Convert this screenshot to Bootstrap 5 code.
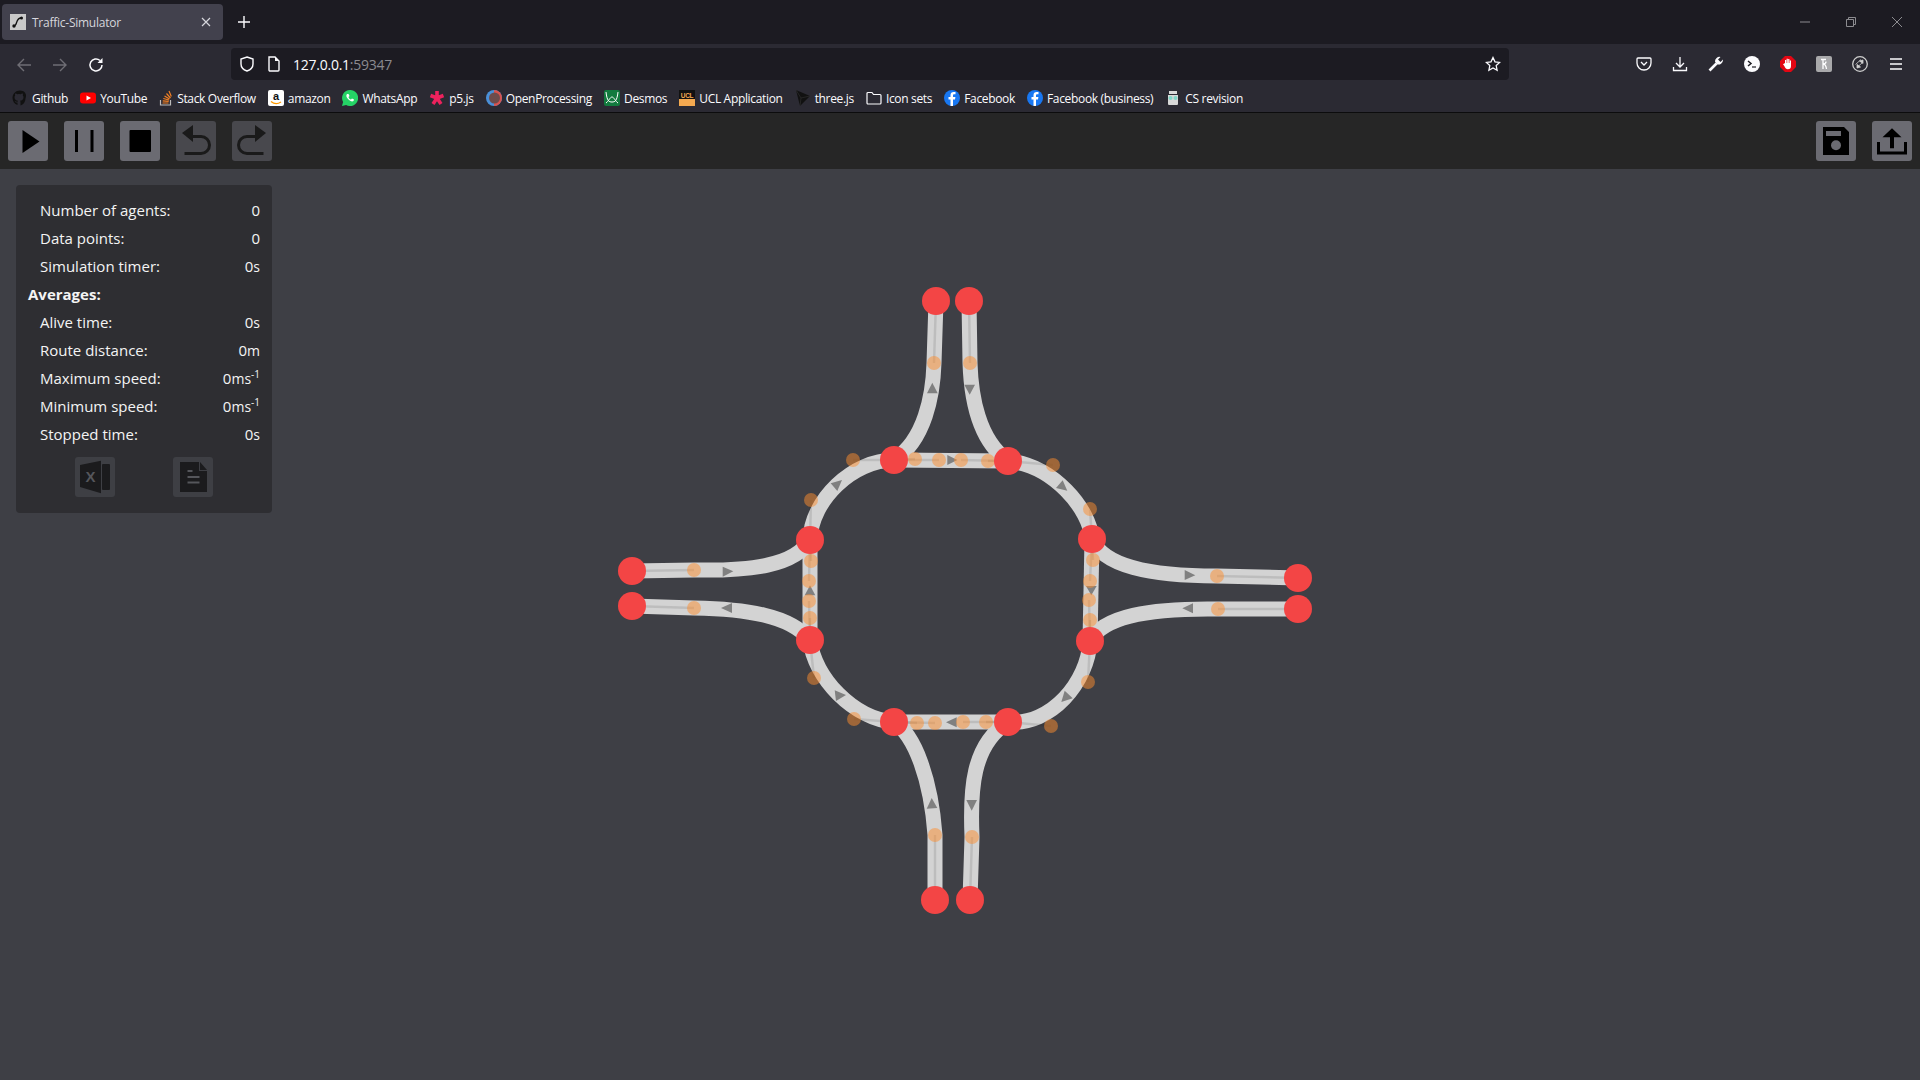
<!DOCTYPE html>
<html lang="en">
<head>
<meta charset="utf-8">
<title>Traffic-Simulator</title>
<link rel="stylesheet" href="https://cdn.jsdelivr.net/npm/bootstrap@5.3.0/dist/css/bootstrap.min.css">
<style>
html,body{height:100%;}
body{background:#3e3f45;font-family:"Open Sans","Liberation Sans",sans-serif;overflow:hidden;color:#f4f4f4;}
.shell{height:1080px;}
.tabstrip{height:44px;background:#1c1b22;}
.tabitem{width:221px;height:36px;margin-left:2px;background:#42414d;border-radius:4px;padding:0 8px;color:#d6d6dc;font-size:12px;letter-spacing:-.25px;}
.tabtitle{margin-left:6px;padding-top:1px;}
.newtab{width:42px;}
.winbtn{width:46px;height:44px;}
.navrow{height:40px;background:#2b2a33;padding-right:6px;}
.navbtn{width:36px;height:32px;}
.navleft{padding-left:6px;padding-top:2px;gap:0;width:231px;}
.urlbar{width:1278px;height:32px;background:#1c1b22;border-radius:4px;padding:0 8px;font-size:14px;letter-spacing:-.25px;color:#fbfbfe;}
.urlbar .dim{color:#8a8a90;}
.urlmid{gap:12px;}
.endicons{margin-left:117px;gap:0;}
.endicons>span{width:36px;}
.bmrow{height:29px;background:#2b2a33;border-bottom:1px solid #0c0c0d;padding-left:12px;gap:12px;font-size:12px;letter-spacing:-.33px;color:#fbfbfe;}
.bmk{gap:4px;}
.bmk span{margin-top:2px;}
.toolrow{height:56px;background:#262626;padding:8px;}
.toolset{gap:16px;}
.tbtn{width:40px;height:40px;border-radius:3px;background:#6b6b72;padding:0;border:0;}
.tbtn.off{background:#48484d;}
.canvasarea{height:911px;padding:16px;}
.roadsvg{position:absolute;inset:0;width:100%;height:100%;}
.statpanel{position:relative;width:256px;background:#2e2e32;border-radius:4px;padding:11px 12px 16px;font-size:15px;z-index:1;}
.statline{height:28px;padding-left:12px;}
.stathead{height:28px;font-weight:700;}
.unit{font-size:14px;}
.unit sup{font-size:10px;top:-.6em;}
.panelbtns{gap:58px;margin-top:9px;}
.pbtn{width:40px;height:40px;background:#3e3f44;border-radius:3px;padding:0;border:0;}
</style>
</head>
<body>
<div class="shell d-flex flex-column">
  <div class="tabstrip d-flex align-items-start">
    <div class="tabitem d-flex align-items-center mt-1 flex-shrink-0">
      <svg width="16" height="16" viewBox="0 0 16 16" class="flex-shrink-0"><rect width="16" height="16" fill="#c9c9c9"/><path d="M4 12c3.500 0 1.500-8 7-8" fill="none" stroke="#111" stroke-width="1.400"/><circle cx="4" cy="12" r="1.700" fill="#111"/><circle cx="11.500" cy="4" r="1.500" fill="#111"/></svg>
      <span class="tabtitle flex-grow-1">Traffic-Simulator</span>
      <svg width="10" height="10" viewBox="0 0 10 10"><path d="M1 1l8 8M9 1l-8 8" stroke="#d6d6dc" stroke-width="1.200"/></svg>
      <span class="ms-1"></span>
    </div>
    <div class="newtab d-flex justify-content-center align-items-center h-100">
      <svg width="12" height="12" viewBox="0 0 12 12"><path d="M6 0v12M0 6h12" stroke="#fbfbfe" stroke-width="1.400"/></svg>
    </div>
    <div class="ms-auto d-flex">
      <div class="winbtn d-flex justify-content-center align-items-center"><svg width="10" height="10" viewBox="0 0 10 10"><path d="M0 5h10" stroke="#8c8c90"/></svg></div>
      <div class="winbtn d-flex justify-content-center align-items-center"><svg width="10" height="10" viewBox="0 0 10 10"><path d="M.5 2.500h7v7h-7zM2.500 2.500V.5h7v7h-2" fill="none" stroke="#8c8c90"/></svg></div>
      <div class="winbtn d-flex justify-content-center align-items-center"><svg width="10" height="10" viewBox="0 0 10 10"><path d="M0 0l10 10M10 0L0 10" stroke="#8c8c90"/></svg></div>
    </div>
  </div>

  <div class="navrow d-flex align-items-center">
    <div class="navleft d-flex align-items-center flex-shrink-0">
      <span class="navbtn d-flex justify-content-center align-items-center"><svg width="16" height="16" viewBox="0 0 16 16"><path d="M15 8H2M8 2L2 8l6 6" fill="none" stroke="#6f6e75" stroke-width="1.400"/></svg></span>
      <span class="navbtn d-flex justify-content-center align-items-center"><svg width="16" height="16" viewBox="0 0 16 16"><path d="M1 8h13M8 2l6 6-6 6" fill="none" stroke="#6f6e75" stroke-width="1.400"/></svg></span>
      <span class="navbtn d-flex justify-content-center align-items-center"><svg width="16" height="16" viewBox="0 0 16 16"><path d="M14 8a6 6 0 1 1-2-4.500" fill="none" stroke="#fbfbfe" stroke-width="1.500"/><path d="M14.500 1v5h-5z" fill="#fbfbfe"/></svg></span>
    </div>
    <div class="urlbar d-flex align-items-center flex-shrink-0">
      <div class="urlmid d-flex align-items-center flex-grow-1">
        <svg width="16" height="16" viewBox="0 0 16 16"><path d="M8 1l6 2v5c0 3.500-3 6-6 7-3-1-6-3.500-6-7V3z" fill="none" stroke="#fbfbfe" stroke-width="1.400"/></svg>
        <svg width="14" height="16" viewBox="0 0 14 16"><path d="M2 1h6l4 4v9a1 1 0 0 1-1 1H3a1 1 0 0 1-1-1z" fill="none" stroke="#fbfbfe" stroke-width="1.400"/><path d="M8 1v4h4z" fill="#fbfbfe"/></svg>
        <span>127.0.0.1<span class="dim">:59347</span></span>
      </div>
      <svg width="16" height="16" viewBox="0 0 16 16"><path d="M8 1.500l2 4.300 4.700.6-3.500 3.200.9 4.700L8 11.900l-4.100 2.400.9-4.700L1.300 6.400 6 5.800z" fill="none" stroke="#fbfbfe" stroke-width="1.300"/></svg>
    </div>
    <div class="endicons d-flex align-items-center">
      <span class="d-flex justify-content-center"><svg width="16" height="16" viewBox="0 0 16 16"><path d="M2 2h12a1 1 0 0 1 1 1v4a7 7 0 0 1-14 0V3a1 1 0 0 1 1-1z" fill="none" stroke="#fbfbfe" stroke-width="1.300"/><path d="M5 6l3 3 3-3" fill="none" stroke="#fbfbfe" stroke-width="1.300"/></svg></span>
      <span class="d-flex justify-content-center"><svg width="16" height="16" viewBox="0 0 16 16"><path d="M8 1v10M4 7l4 4 4-4M1.500 11v3.500h13V11" fill="none" stroke="#fbfbfe" stroke-width="1.300"/></svg></span>
      <span class="d-flex justify-content-center"><svg width="16" height="16" viewBox="0 0 16 16"><path d="M1.500 14.500l7-7" stroke="#fbfbfe" stroke-width="2.600"/><path d="M15 3.500a4.500 4.500 0 0 1-6.500 4.500L7 5.500A4.500 4.500 0 0 1 12.500 1L10 3.500l2.500 2.500z" fill="#fbfbfe"/></svg></span>
      <span class="d-flex justify-content-center"><svg width="16" height="16" viewBox="0 0 16 16"><circle cx="8" cy="8" r="8" fill="#fbfbfe"/><path d="M4 5l3 2.500L4 10" fill="none" stroke="#1c1b22" stroke-width="1.500"/><path d="M8 11h4" stroke="#1c1b22" stroke-width="1.200"/></svg></span>
      <span class="d-flex justify-content-center"><svg width="16" height="16" viewBox="0 0 16 16"><path d="M5 0h6l5 5v6l-5 5H5l-5-5V5z" fill="#e30613"/><path d="M5 7V4h1.200v3h.4V2.800h1.200V7h.4V3h1.200v4h.4V4.500h1.200V10a3.200 3.200 0 0 1-3.200 3.200c-1.500 0-2.500-1-3.500-3.200L3 8.200z" fill="#fff"/></svg></span>
      <span class="d-flex justify-content-center"><svg width="16" height="16" viewBox="0 0 16 16"><rect width="16" height="16" rx="2" fill="#a9a9ab"/><path d="M5 3.500h5M7 3.500V13M7 8c2 0 3 1 3.500 5M7 8c2 0 3-1 3-2.500" fill="none" stroke="#fff" stroke-width="1.300"/></svg></span>
      <span class="d-flex justify-content-center"><svg width="16" height="16" viewBox="0 0 16 16"><circle cx="8" cy="8" r="7.300" fill="none" stroke="#cfcfcf" stroke-width="1.300"/><path d="M3.500 8.500L9 3.500M5 11.500l5.500-5M7.500 5l3.500-1v3.500zM8.500 11L5 12V8.500z" fill="#cfcfcf" stroke="#cfcfcf" stroke-width=".8"/></svg></span>
      <span class="d-flex justify-content-center"><svg width="14" height="12" viewBox="0 0 14 12"><path d="M1 1h12M1 6h12M1 11h12" stroke="#fbfbfe" stroke-width="1.500"/></svg></span>
    </div>
  </div>

  <div class="bmrow d-flex align-items-center flex-shrink-0">
    <div class="bmk d-flex align-items-center"><svg width="16" height="16" viewBox="0 0 16 16"><path d="M8 .5C3.800.5.5 3.800.5 8c0 3.300 2.100 6.100 5 7.100V12.500c-2 .4-2.500-1-2.700-1.500 1 .2 1.500 1 2.700 1 0-.5.200-.9.500-1.200-2-.2-3.500-1-3.500-3.500 0-.8.300-1.400.7-1.900-.1-.4-.3-1.200.1-2 .8 0 1.600.5 2 .8a7 7 0 0 1 3.400 0c.4-.3 1.200-.8 2-.8.400.8.200 1.600.1 2 .4.500.7 1.100.7 1.900 0 2.500-1.500 3.300-3.500 3.500.3.300.5.800.5 1.400v3.300c2.900-1 5-3.800 5-7.100C15.500 3.800 12.200.5 8 .5z" fill="#111"/></svg><span>Github</span></div>
    <div class="bmk d-flex align-items-center"><svg width="16" height="16" viewBox="0 0 16 16"><rect y="2.500" width="16" height="11" rx="3" fill="#f00"/><path d="M6.500 5.500v5l4.500-2.500z" fill="#fff"/></svg><span>YouTube</span></div>
    <div class="bmk d-flex align-items-center"><svg width="14" height="16" viewBox="0 0 14 16"><path d="M1.500 10v5h10v-5" fill="none" stroke="#bcbbbb" stroke-width="1.200"/><path d="M3.500 13h6M3.700 10.800l6 .5M4.300 8.500l5.700 1.500M5.500 6l5 3M7.500 3.500l4 4.500M10 1l2.300 5.500" stroke="#f48024" stroke-width="1.200"/></svg><span>Stack Overflow</span></div>
    <div class="bmk d-flex align-items-center"><svg width="16" height="16" viewBox="0 0 16 16"><rect width="16" height="16" rx="2" fill="#fff"/><text x="8" y="10" text-anchor="middle" font-size="11" font-weight="700" font-family="Liberation Sans,sans-serif" fill="#111">a</text><path d="M3 11.500c3 2.500 7 2.500 10 .5" fill="none" stroke="#f90" stroke-width="1.300"/></svg><span>amazon</span></div>
    <div class="bmk d-flex align-items-center"><svg width="16" height="16" viewBox="0 0 16 16"><path d="M8 0a8 8 0 0 0-6.900 12L0 16l4.100-1.100A8 8 0 1 0 8 0z" fill="#25d366"/><path d="M5 4c-1 1-1 3 1 5s4 3 5.500 2l.5-1.500-2-1-1 1c-1 0-2.500-1.500-2.500-2.500l1-1-1-2z" fill="#fff"/></svg><span>WhatsApp</span></div>
    <div class="bmk d-flex align-items-center"><svg width="16" height="16" viewBox="0 0 16 16"><path d="M8 8V1M8 8l6.500-2.500M8 8l4 6M8 8l-4 6M8 8L1.500 5.500" stroke="#ed225d" stroke-width="3.600"/></svg><span>p5.js</span></div>
    <div class="bmk d-flex align-items-center"><svg width="16" height="16" viewBox="0 0 16 16"><circle cx="8" cy="8" r="8" fill="#4a90d9"/><path d="M8 0a8 8 0 0 1 0 16z" fill="#d9534f"/><circle cx="8.500" cy="8" r="5.500" fill="#6d4c4c"/></svg><span>OpenProcessing</span></div>
    <div class="bmk d-flex align-items-center"><svg width="16" height="16" viewBox="0 0 16 16"><rect width="16" height="16" rx="2" fill="#127a3e"/><path d="M2 2c1 9 3 10 6 10s5-1 6-10M2 13c3-2 4-6 6-6s3 4 6 6" fill="none" stroke="#fff" stroke-width="1"/></svg><span>Desmos</span></div>
    <div class="bmk d-flex align-items-center"><svg width="16" height="16" viewBox="0 0 16 16"><rect width="16" height="16" fill="#f4a950"/><rect width="16" height="9" fill="#111"/><text x="8" y="8" text-anchor="middle" font-size="6.500" font-weight="700" font-family="Liberation Sans,sans-serif" fill="#f4a950">UCL</text></svg><span>UCL Application</span></div>
    <div class="bmk d-flex align-items-center"><svg width="16" height="16" viewBox="0 0 16 16"><path d="M1 0l14 6-10 10z" fill="#111"/><path d="M1 0l5 8 9-2M6 8l-1 8" stroke="#333" stroke-width=".6" fill="none"/></svg><span>three.js</span></div>
    <div class="bmk d-flex align-items-center"><svg width="16" height="16" viewBox="0 0 16 16"><path d="M1 3.500a1 1 0 0 1 1-1h4l1.500 2H14a1 1 0 0 1 1 1V13a1 1 0 0 1-1 1H2a1 1 0 0 1-1-1z" fill="none" stroke="#fbfbfe" stroke-width="1.200"/></svg><span>Icon sets</span></div>
    <div class="bmk d-flex align-items-center"><svg width="16" height="16" viewBox="0 0 16 16"><circle cx="8" cy="8" r="8" fill="#1877f2"/><path d="M9 16V9.500h2l.4-2.500H9V5.500c0-.8.300-1.200 1.300-1.200h1.200V2.100C11 2 10.400 2 9.700 2 7.700 2 6.500 3.200 6.500 5.200V7H4.500v2.500h2V16z" fill="#fff"/></svg><span>Facebook</span></div>
    <div class="bmk d-flex align-items-center"><svg width="16" height="16" viewBox="0 0 16 16"><circle cx="8" cy="8" r="8" fill="#1877f2"/><path d="M9 16V9.500h2l.4-2.500H9V5.500c0-.8.300-1.200 1.300-1.200h1.200V2.100C11 2 10.400 2 9.700 2 7.700 2 6.500 3.200 6.500 5.200V7H4.500v2.500h2V16z" fill="#fff"/></svg><span>Facebook (business)</span></div>
    <div class="bmk d-flex align-items-center"><svg width="16" height="16" viewBox="0 0 16 16"><path d="M4 1h8v3H4zM3 5h10v9a1 1 0 0 1-1 1H4a1 1 0 0 1-1-1z" fill="#d8d8d8"/><circle cx="5.500" cy="8" r="2" fill="#7fd6c8"/><circle cx="10.500" cy="8" r="2" fill="#7fd6c8"/></svg><span>CS revision</span></div>
  </div>

  <div class="toolrow d-flex justify-content-between flex-shrink-0">
    <div class="toolset d-flex">
      <button class="tbtn d-flex justify-content-center align-items-center" aria-label="Play"><svg width="40" height="40" viewBox="0 0 40 40"><path d="M14.500 9v23l17-11.500z" fill="#000"/></svg></button>
      <button class="tbtn d-flex justify-content-center align-items-center" aria-label="Pause"><svg width="40" height="40" viewBox="0 0 40 40"><path d="M11 9h3v22h-3zM26.500 9h3v22h-3z" fill="#000"/></svg></button>
      <button class="tbtn d-flex justify-content-center align-items-center" aria-label="Stop"><svg width="40" height="40" viewBox="0 0 40 40"><rect x="9.500" y="9" width="21.500" height="22" rx="1" fill="#000"/></svg></button>
      <button class="tbtn off d-flex justify-content-center align-items-center" aria-label="Undo"><svg width="40" height="40" viewBox="0 0 40 40"><path d="M14 15.500h11a8.500 8.500 0 0 1 0 17H8.500" fill="none" stroke="#1a1a1a" stroke-width="3"/><path d="M17 4v17L6 12z" fill="#1a1a1a"/></svg></button>
      <button class="tbtn off d-flex justify-content-center align-items-center" aria-label="Redo"><svg width="40" height="40" viewBox="0 0 40 40"><path d="M26 15.500H15a8.500 8.500 0 0 0 0 17h16.500" fill="none" stroke="#1a1a1a" stroke-width="3"/><path d="M23 4v17l11-9z" fill="#1a1a1a"/></svg></button>
    </div>
    <div class="toolset d-flex">
      <button class="tbtn d-flex justify-content-center align-items-center" aria-label="Save"><svg width="40" height="40" viewBox="0 0 40 40"><path d="M7 6h21l5 5v23H7zM10 10v5h15v-5z" fill="#000" fill-rule="evenodd"/><circle cx="20" cy="24.300" r="5" fill="#6b6b72"/></svg></button>
      <button class="tbtn d-flex justify-content-center align-items-center" aria-label="Upload"><svg width="40" height="40" viewBox="0 0 40 40"><path d="M6.500 21v11h27V21" fill="none" stroke="#000" stroke-width="3"/><path d="M20 7.300l9.500 9h-7.500v11h-4v-11h-7.500z" fill="#000"/></svg></button>
    </div>
  </div>

  <div class="canvasarea position-relative flex-grow-1">
    <svg class="roadsvg" viewBox="0 169 1920 911" preserveAspectRatio="none">
      <g fill="none" stroke="#d3d3d3" stroke-width="15">
        <path d="M894 460L1008 461"/>
        <path d="M1008 461C1053 465 1090 509 1092 539"/>
        <path d="M1092 539L1090 641"/>
        <path d="M1090 641C1088 682 1051 726 1008 722"/>
        <path d="M1008 722L894 722"/>
        <path d="M894 722C854 719 814 678 810 640"/>
        <path d="M810 640L810 540"/>
        <path d="M810 540C811 500 853 460 894 460"/>
        <path d="M936 301L934 363C933 395 925 440 894 460"/>
        <path d="M969 301L970 363C971 395 978 440 1008 461"/>
        <path d="M632 571L694 570C750 571 795 566 810 540"/>
        <path d="M632 606L694 608C745 609 790 615 810 640"/>
        <path d="M1298 578L1217 576C1150 576 1103 566 1092 539"/>
        <path d="M1298 609L1218 609C1150 608 1103 616 1090 641"/>
        <path d="M935 900L935 835C931 780 915 735 894 722"/>
        <path d="M970 900L972 837C970 790 972 745 1008 722"/>
      </g>
      <g stroke="#000" stroke-opacity=".1" stroke-width="2.500" fill="none">
        <path d="M894 460L939 460M1008 461L961 460M1008 461L1053 465M1092 539L1090 509M1092 539L1090 581M1090 641L1089 600"/>
        <path d="M1090 641L1088 682M1008 722L1051 726M1008 722L963 722M894 722L935 723M894 722L854 719M810 640L814 678"/>
        <path d="M810 640L809 601M810 540L809 581M810 540L811 500M894 460L853 460M894 460L915 459M936 301L934 363"/>
        <path d="M969 301L970 363M1008 461L988 461M632 571L694 570M810 540L811 561M632 606L694 608M810 640L810 618"/>
        <path d="M1092 539L1093 560M1298 578L1217 576M1090 641L1090 620M1298 609L1218 609M894 722L917 723M935 900L935 835M970 900L972 837M1008 722L986 722"/>
      </g>
      <g fill="#808080">
        <polygon points="947.300,455 947.300,465 957.300,460"/>
        <polygon points="1062.700,480.300 1056,488 1067.300,490.700"/>
        <polygon points="842,480 830.700,483.300 837.300,491"/>
        <polygon points="834.700,690.300 836,701 846,695"/>
        <polygon points="1064.700,690.700 1061.300,702 1072.700,698.300"/>
        <polygon points="810,585.300 804.700,595.300 815.300,595.300"/>
        <polygon points="1086,586 1096.700,586 1091.300,595.300"/>
        <polygon points="946,722.300 956.700,717.300 956.700,727.300"/>
        <polygon points="932.300,382.700 927,393.300 937.700,393.300"/>
        <polygon points="964.300,384.700 975,384.700 969.700,394.700"/>
        <polygon points="722.700,566.700 722.700,576.700 733.300,571.300"/>
        <polygon points="732,603 732,613 721,608"/>
        <polygon points="1184.700,570 1184.700,580 1195.300,575.300"/>
        <polygon points="1193,603.300 1193,613.300 1182.300,608.300"/>
        <polygon points="931.700,798 926.700,808.700 937.300,808"/>
        <polygon points="966.300,800 977,800 971.700,810.700"/>
      </g>
      <g fill="#fd8d2d" fill-opacity=".5">
        <circle cx="915" cy="459" r="7"/><circle cx="939" cy="460" r="7"/><circle cx="961" cy="460" r="7"/><circle cx="988" cy="461" r="7"/>
        <circle cx="853" cy="460" r="7"/><circle cx="811" cy="500" r="7"/>
        <circle cx="811" cy="561" r="7"/><circle cx="809" cy="581" r="7"/><circle cx="809" cy="601" r="7"/><circle cx="810" cy="618" r="7"/>
        <circle cx="814" cy="678" r="7"/><circle cx="854" cy="719" r="7"/>
        <circle cx="917" cy="723" r="7"/><circle cx="935" cy="723" r="7"/><circle cx="963" cy="722" r="7"/><circle cx="986" cy="722" r="7"/>
        <circle cx="1051" cy="726" r="7"/><circle cx="1088" cy="682" r="7"/>
        <circle cx="1090" cy="620" r="7"/><circle cx="1089" cy="600" r="7"/><circle cx="1090" cy="581" r="7"/><circle cx="1093" cy="560" r="7"/>
        <circle cx="1090" cy="509" r="7"/><circle cx="1053" cy="465" r="7"/>
        <circle cx="934" cy="363" r="7"/><circle cx="970" cy="363" r="7"/>
        <circle cx="694" cy="570" r="7"/><circle cx="694" cy="608" r="7"/>
        <circle cx="1217" cy="576" r="7"/><circle cx="1218" cy="609" r="7"/>
        <circle cx="935" cy="835" r="7"/><circle cx="972" cy="837" r="7"/>
      </g>
      <g fill="#f34545">
        <circle cx="894" cy="460" r="14"/><circle cx="1008" cy="461" r="14"/><circle cx="810" cy="540" r="14"/><circle cx="1092" cy="539" r="14"/>
        <circle cx="810" cy="640" r="14"/><circle cx="1090" cy="641" r="14"/><circle cx="894" cy="722" r="14"/><circle cx="1008" cy="722" r="14"/>
        <circle cx="936" cy="301" r="14"/><circle cx="969" cy="301" r="14"/><circle cx="632" cy="571" r="14"/><circle cx="632" cy="606" r="14"/>
        <circle cx="1298" cy="578" r="14"/><circle cx="1298" cy="609" r="14"/><circle cx="935" cy="900" r="14"/><circle cx="970" cy="900" r="14"/>
      </g>
    </svg>

    <div class="statpanel">
      <div class="statline d-flex justify-content-between align-items-center"><span>Number of agents:</span><span>0</span></div>
      <div class="statline d-flex justify-content-between align-items-center"><span>Data points:</span><span>0</span></div>
      <div class="statline d-flex justify-content-between align-items-center"><span>Simulation timer:</span><span>0<span class="unit">s</span></span></div>
      <div class="stathead d-flex align-items-center">Averages:</div>
      <div class="statline d-flex justify-content-between align-items-center"><span>Alive time:</span><span>0<span class="unit">s</span></span></div>
      <div class="statline d-flex justify-content-between align-items-center"><span>Route distance:</span><span>0<span class="unit">m</span></span></div>
      <div class="statline d-flex justify-content-between align-items-center"><span>Maximum speed:</span><span>0<span class="unit">ms<sup>-1</sup></span></span></div>
      <div class="statline d-flex justify-content-between align-items-center"><span>Minimum speed:</span><span>0<span class="unit">ms<sup>-1</sup></span></span></div>
      <div class="statline d-flex justify-content-between align-items-center"><span>Stopped time:</span><span>0<span class="unit">s</span></span></div>
      <div class="panelbtns d-flex justify-content-center">
        <button class="pbtn d-flex justify-content-center align-items-center" aria-label="Export to Excel"><svg width="40" height="40" viewBox="0 0 40 40"><path d="M5 8l21-4.300v32.600L5 30z" fill="#1b1b1d"/><rect x="27" y="7" width="8" height="26" rx="1" fill="#1b1b1d"/><text x="15.500" y="25" text-anchor="middle" font-size="15" font-weight="700" font-family="Liberation Sans,sans-serif" fill="#55565b">X</text></svg></button>
        <button class="pbtn d-flex justify-content-center align-items-center" aria-label="Export to text"><svg width="40" height="40" viewBox="0 0 40 40"><path d="M7 5h19v9h8v21H7z" fill="#1b1b1d"/><path d="M27 5l7 8h-7z" fill="#1b1b1d"/><path d="M14.500 14h5M14.500 20h12M14.500 25.500h12" stroke="#55565b" stroke-width="2"/></svg></button>
      </div>
    </div>
  </div>
</div>
<script src="https://cdn.jsdelivr.net/npm/bootstrap@5.3.0/dist/js/bootstrap.bundle.min.js"></script>
</body>
</html>
